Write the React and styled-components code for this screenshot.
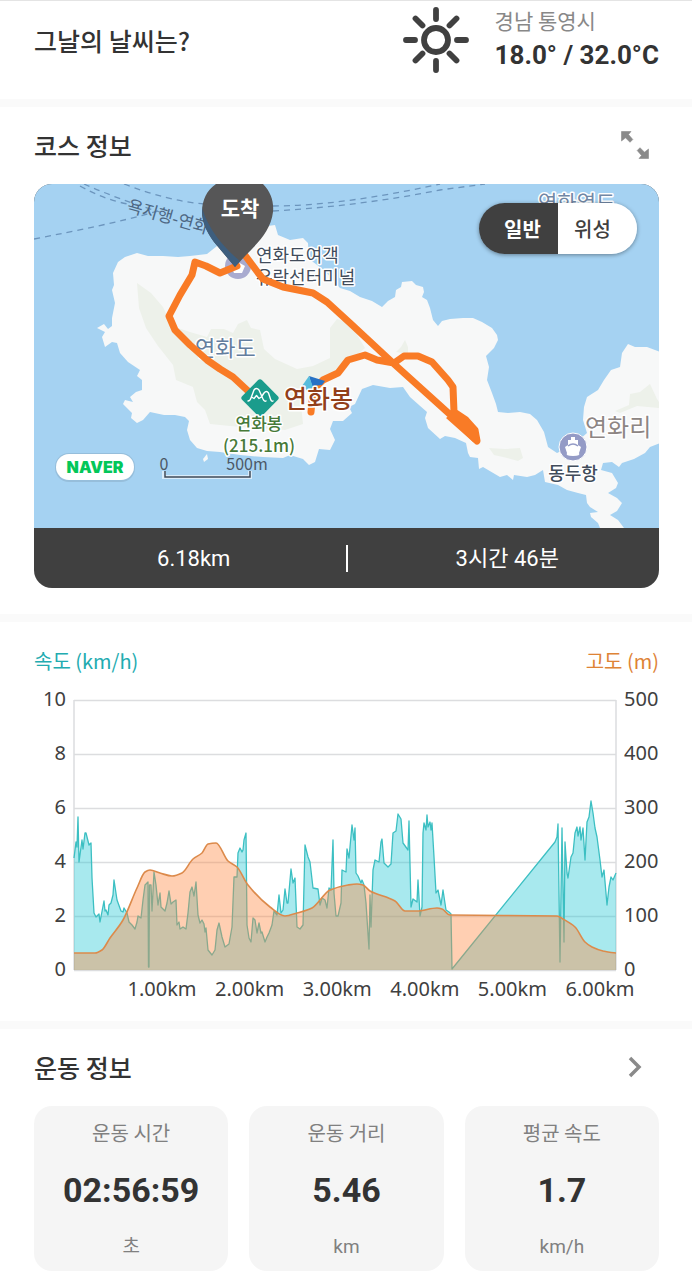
import React, { useState } from "react";
import styled, { createGlobalStyle } from "styled-components";

const GlobalStyle = createGlobalStyle`
	* {
		box-sizing: border-box;
	}

	body {
		margin: 0;
		background-color: #fff;
		color: #333;
		font-family: "Noto Sans CJK KR", sans-serif;
	}

	h2,
	p,
	dl,
	dt,
	dd {
		margin: 0;
	}

	button {
		font-family: inherit;
		border: 0;
		padding: 0;
		cursor: pointer;
	}
`;

const Page = styled.main`
	border-top: 1px solid #e4e4e4;
`;

const Section = styled.section`
	padding: 0 33px ${(props) => props.$bottom}px 34px;
	border-bottom: ${(props) => (props.$last ? "0" : "8px solid #fafafa")};
`;

const SectionHeader = styled.header`
	display: flex;
	align-items: center;
	justify-content: space-between;
	height: 77px;
	padding-bottom: 2px;
`;

const Title = styled.h2`
	font-size: 25px;
	line-height: 36px;
	font-weight: 500;
`;

const IconButton = styled.button`
	display: flex;
	align-items: center;
	justify-content: center;
	width: 48px;
	height: 46px;
	background: none;
	color: #8a8a8a;
`;

const WeatherRow = styled.div`
	display: flex;
	align-items: center;
	justify-content: space-between;
	padding-top: 4px;
`;

const Weather = styled.div`
	display: flex;
	align-items: center;
	gap: 26px;
`;

const Place = styled.p`
	font-size: 21px;
	line-height: 30px;
	color: #888;
`;

const Temperature = styled.p`
	font-family: Roboto, "Noto Sans CJK KR", sans-serif;
	font-size: 26px;
	line-height: 40px;
	font-weight: 700;
	white-space: nowrap;
`;

const CourseCard = styled.div`
	border-radius: 18px;
	overflow: hidden;
	background-color: #404040;
`;

const MapArea = styled.div`
	position: relative;

	svg {
		display: block;
		width: 100%;
		height: auto;
	}
`;

const MapToggle = styled.div`
	position: absolute;
	top: 19px;
	right: 22px;
	display: flex;
	border-radius: 26px;
	overflow: hidden;
	box-shadow: 0 1px 4px rgba(0, 0, 0, 0.4);
`;

const ToggleButton = styled.button`
	width: 79px;
	height: 51px;
	padding: ${(props) => (props.$side === "left" ? "0 0 0 8px" : "0 10px 0 0")};
	font-size: 20px;
	font-weight: ${(props) => (props.$active ? 700 : 500)};
	background-color: ${(props) => (props.$active ? "#404040" : "#fff")};
	color: ${(props) => (props.$active ? "#fff" : "#404040")};
`;

const MapLabel = styled.text`
	font-family: "Noto Sans CJK KR", sans-serif;
	font-size: ${(props) => props.$size}px;
	font-weight: ${(props) => props.$weight || 400};
	fill: ${(props) => props.$color};
	stroke: #fff;
	stroke-width: ${(props) => (props.$plain ? 0 : 3)}px;
	stroke-linejoin: round;
	paint-order: stroke;
`;

const NaverLabel = styled.text`
	font-family: Inter, sans-serif;
	font-size: 16px;
	font-weight: 900;
	fill: #03c75a;
`;

const CourseSummary = styled.div`
	display: flex;
	align-items: center;
	height: 60px;
`;

const SummaryValue = styled.p`
	flex: 1;
	padding: 2px 0 0 8px;
	font-family: Roboto, "Noto Sans CJK KR", sans-serif;
	font-size: 22px;
	line-height: 36px;
	text-align: center;
	color: #fff;
`;

const SummaryDivider = styled.span`
	width: 2px;
	height: 27px;
	background-color: #fff;
`;

const Legend = styled.div`
	display: flex;
	justify-content: space-between;
	padding-top: 24px;
`;

const LegendItem = styled.p`
	font-size: 20px;
	line-height: 30px;
	color: ${(props) => props.$color};
`;

const ChartSvg = styled.svg`
	display: block;
	width: 100%;
	height: auto;
`;

const AxisLabel = styled.text`
	font-family: "Noto Sans", sans-serif;
	font-size: 20px;
	fill: #404040;
`;

const StatGrid = styled.dl`
	display: grid;
	grid-template-columns: repeat(3, 1fr);
	gap: 21px;
`;

const StatCard = styled.div`
	display: flex;
	flex-direction: column;
	align-items: center;
	gap: 12px;
	padding: 12px 8px 9px;
	border-radius: 18px;
	background-color: #f5f5f5;
`;

const StatLabel = styled.dt`
	font-size: 20px;
	line-height: 30px;
	color: #808080;
`;

const StatValue = styled.dd`
	font-family: Roboto, "Noto Sans CJK KR", sans-serif;
	font-size: 34px;
	line-height: 60px;
	font-weight: 700;
`;

const StatUnit = styled.dd`
	font-family: Roboto, "Noto Sans CJK KR", sans-serif;
	font-size: 19px;
	line-height: 30px;
	color: #808080;
`;

const SunIcon = () => (
	<svg width="66" height="66" viewBox="0 0 66 66" fill="none" stroke="#404040" strokeWidth="5.8" strokeLinecap="round" aria-hidden="true">
		<circle cx="33" cy="33" r="12" />
		<path d="M33 3v9M33 54v9M3 33h9M54 33h9M12.500 11.500l7 7M53.500 11.500l-7 7M12.500 53.500l7-7M53.500 53.500l-7-7" />
	</svg>
);

const ExpandIcon = () => (
	<svg width="30" height="28" viewBox="0 0 30 28" aria-hidden="true">
		<path d="M1.500 .5H11L8.500 3.500L12.800 8.500L10 11.300L5.500 6.800L1.500 10ZM28.500 27.500H19L21.500 24.500L17.200 19.500L20 16.700L24.500 21.200L28.500 18Z" fill="currentColor" stroke="currentColor" strokeWidth="0.600" strokeLinejoin="round" />
	</svg>
);

const ChevronIcon = () => (
	<svg width="14" height="22" viewBox="0 0 14 22" fill="none" stroke="currentColor" strokeWidth="3.5" aria-hidden="true">
		<path d="M2 2L11 11L2 20" />
	</svg>
);

const MAINLAND =
	"M118 262L125 257L137 253L148 256L163 256L178 257L190 256L207 254L217 246L240 236L268 226L275 225L278 235L290 240L303 238L308 243L309 259L324 270L340 288L350 291L360 297L372 301L382 307L388 301L395 297L396 290L401 287L402 282L412 281L416 285L423 287L424 292L422 297L427 300L430 308L433 320L438 326L442 321L450 319L463 318L473 318L482 322L492 328L497 335L498 340L494 348L486 356L489 367L487 380L492 393L496 404L498 412L508 413L520 412L530 414L537 420L544 432L548 447L557 453L572 446L587 433L583 420L584 407L587 397L598 390L604 380L611 370L620 367L622 353L628 344L635 347L647 347L660 352V443L650 447L645 453L634 459L622 463L619 467L612 462L603 463L601 470L612 473L618 483L616 488L608 493L617 498L622 503L617 511L610 515L618 520L624 528H600L598 523L591 517L590 513L598 512L590 507L587 503L586 495L578 493L567 490L558 485L545 482L543 470L535 475L527 477L514 475L513 480L507 475L500 477L483 467L479 469L478 458L470 457L468 453L466 443L455 438L445 436L440 439L428 428L425 418L427 412L419 405L410 397L403 387L390 388L373 385L362 389L355 404L349 407L352 413L343 421L333 421L330 429L335 440L330 450L319 449L315 462L309 465L303 459L290 455L283 458L263 457L240 455L220 452L207 451L197 448L190 440L187 430L189 421L185 417L175 415L164 415L150 412L143 420L137 423L131 418L132 413L123 404L125 400L133 402L130 397L136 392L142 390L142 380L137 376L140 370L128 362L120 353L117 343L112 342L105 347L102 337L105 332L97 328L104 324L108 329L112 326L112 318L115 303L112 290L114 285L113 273Z";

const FOREST =
	"M137 283L151 293L163 307L172 326L190 332L207 337L211 329L224 329L233 333L238 324L247 320L251 328L260 330L264 349L275 359L297 369L313 366L330 358L330 328L337 319L350 323L365 348L350 361L325 380L300 395L303 424L285 430L230 426L210 424L205 410L197 402L193 387L176 380L173 365L158 346L146 328L139 308Z";

const ROUTE =
	"M237 266L220 273L206 266L195 262L192 275L180 295L169 316L175 330L190 345L207 360L220 369L233 377L247 390L256 398M244 254L256 270L263 279L283 287L313 293L327 302L350 323L393 363L455 419L477 441L475 430L466 420L454 412L453 387L448 380L432 362L418 356L404 356L394 363L377 360L365 355L348 360L338 373L323 380L313 390L311 412";

const CourseMap = () => (
	<svg viewBox="34 184 625 344" role="img" aria-label="연화도 코스 지도">
		<rect x="34" y="184" width="625" height="344" fill="#a5d2f2" />
		<g fill="none" stroke="#6c95bd" strokeWidth="1.3" strokeDasharray="6 5">
			<path d="M34 239C80 230 120 222 158 211" />
			<path d="M84 184Q120 200 160 212" />
			<path d="M80 186Q105 200 128 204" />
			<path d="M124 184Q168 201 204 204M273 211Q360 206 440 190L485 184" />
			<path d="M273 206Q340 206 440 184" />
		</g>
		<path d={MAINLAND} fill="#f7f8f8" />
		<path d="M203 459L207 454L208 459L204 462Z" fill="#f7f8f8" />
		<g fill="#edf1ea">
			<path d={FOREST} />
			<path d="M396 352L401 347L405 340L408 347L408 354Z" />
			<path d="M489 448L505 449L520 448L523 458L518 461L503 457L494 455Z" />
			<path d="M615 411L629 405L630 394L640 392L650 384L657 399L659 402V408L637 406L620 413Z" />
		</g>

		<MapLabel $size={17} $color="#4d6783" $plain transform="translate(126 211) rotate(16)">
			욕지행-연화
		</MapLabel>
		<MapLabel $size={21} $color="#7187a5" x="538" y="210">
			연화열도
		</MapLabel>
		<MapLabel $size={22} $color="#647e9e" x="195" y="356">
			연화도
		</MapLabel>
		<MapLabel $size={24} $color="#8d8583" x="585" y="436">
			연화리
		</MapLabel>

		{/* ferry terminal under the arrival pin */}
		<circle cx="238" cy="266" r="13" fill="#a9abd0" />
		<path d="M231 266L238 262L245 266L242 273H234Z" fill="#fff" />
		<MapLabel $size={18} $color="#414c5b" x="256" y="262">
			연화도여객
		</MapLabel>
		<MapLabel $size={18} $color="#414c5b" x="256" y="284">
			유락선터미널
		</MapLabel>

		<path d={ROUTE} fill="none" stroke="#f97b26" strokeWidth="7" strokeLinejoin="round" strokeLinecap="round" />
		<path d="M454 412L466 418L475 427L480 439Q480 446 473 442L446 418Z" fill="#f97b26" />

		<path d="M309 376L325 381L322 385L312 386Z" fill="#2772c5" />
		<path d="M302 386L309 376L313 387L308 391Z" fill="#57bddd" />

		{/* arrival pin */}
		<path d="M216 184H263C271 192 274 202 273 212C271 230 258 243 246 255L235 267L214 242C206 231 202 222 202 212C202 200 207 190 216 184Z" fill="#565657" />
		<path d="M202 208C202 222 206 231 214 242L235 267L240 261C229 252 210 234 202 208Z" fill="#3d5e7e" />
		<MapLabel $size={21} $weight={700} $color="#fff" $plain x="240" y="216" textAnchor="middle">
			도착
		</MapLabel>

		{/* summit marker */}
		<rect x="246" y="384" width="28" height="28" rx="3" fill="#1a9c8c" transform="rotate(45 260 398)" />
		<path d="M248 401Q250 401 251 398L254 390Q256.500 387 259 390L263 399Q264.500 402 266 401M251.500 397L254 398.500L256.500 395.500L259 398.500L262 396.500M262 396L264 393Q266.500 390 268.500 393L270.500 399Q271.500 402 273 401" fill="none" stroke="#fff" strokeWidth="1.4" strokeLinecap="round" strokeLinejoin="round" />
		<MapLabel $size={25} $weight={500} $color="#923f1a" x="284" y="408">
			연화봉
		</MapLabel>
		<MapLabel $size={17} $color="#477a38" $weight={500} x="259" y="430" textAnchor="middle">
			연화봉
		</MapLabel>
		<MapLabel $size={17} $color="#477a38" $weight={500} x="259" y="452" textAnchor="middle">
			(215.1m)
		</MapLabel>

		{/* Dongdu harbour */}
		<circle cx="573" cy="447" r="14" fill="#949bc6" stroke="#fff" strokeWidth="1" />
		<path d="M571 437H575V440H578V445L581 447L579 453Q581 456 573 456Q565 456 567 453L565 447L568 445V440H571Z" fill="#fff" />
		<path d="M568 446Q573 442 578 446" fill="none" stroke="#949bc6" strokeWidth="1.500" />
		<MapLabel $size={18} $color="#414c5b" $weight={500} x="573" y="480" textAnchor="middle">
			동두항
		</MapLabel>

		<rect x="55" y="453" width="80" height="29" rx="14" fill="#7f9fb8" opacity="0.4" />
		<rect x="56" y="454" width="78" height="26" rx="13" fill="#fff" />
		<NaverLabel x="95" y="473" textAnchor="middle">
			NAVER
		</NaverLabel>

		<path d="M164 471V477H250V471" fill="none" stroke="#d9ecfa" strokeWidth="4" />
		<path d="M165 471V477H250V471" fill="none" stroke="#3f4a58" strokeWidth="1.500" />
		<MapLabel $size={16} $color="#4c5866" $plain x="164" y="470" textAnchor="middle">
			0
		</MapLabel>
		<MapLabel $size={16} $color="#4c5866" $plain x="247" y="470" textAnchor="middle">
			500m
		</MapLabel>
	</svg>
);

const SPEED =
	"74,858 76,842 77,847 78,817 79,862 82,840 83,849 85,833 86,833 89,845 91,843 92,878 94,913 96,917 99,914 100,922 104,901 105,911 106,910 108,915 109,905 111,903 113,895 114,880 117,900 121,911 123,912 124,908 127,913 129,922 132,925 135,929 137,922 138,916 141,918 143,900 145,885 148,882 148.500,967 149,967 149.500,885 151,885 152,911 154,872 156,885 158,905 160,893 161,907 165,911 167,903 169,891 171,904 173,902 176,900 177,925 179,922 180,929 183,927 186,929 188,913 190,892 192,887 194,896 196,882 198,915 200,923 202,920 204,924 205,932 206,928 208,950 212,955 215,950 217,930 219,923 222,937 225,947 229,944 232,927 234,877 237,877 238,853 240,848 242,852 243,850 244,840 246,833 247,925 249,938 251,942 253,918 255,920 257,933 259,923 261,933 262,932 265,942 267,937 269,933 272,925 274,911 277,915 279,895 281,913 283,910 285,889 287,903 288,903 291,869 293,883 295,878 297,927 300,929 303,925 305,845 308,857 310,862 313,888 318,889 320,905 322,898 325,900 327,908 329,888 331,890 333,840 334,893 336,916 338,916 341,903 342,870 346,872 347,849 349,858 352,825 354,840 355,828 356,873 358,876 361,883 362,880 364,885 366,903 369,949 370,895 371,927 373,870 375,860 379,862 381,842 382,839 384,863 388,867 391,864 393,833 396,831 398,814 401,819 403,843 408,850 409,821 411,907 413,899 417,902 418,880 420,916 422,907 423,833 424,823 426,830 427,815 428,827 430,822 431,830 432,823 434,857 436,893 438,890 441,905 443,890 446,910 449,912 451,914 452,969 555,842 557,837 558,824 560,962 562,828 564,942 565,842 567,873 568,878 571,857 573,853 575,833 577,827 578,836 580,827 581,840 583,828 585,860 587,822 589,817 591,801 593,813 595,828 597,837 600,860 602,877 604,870 607,905 609,887 611,877 613,880 616,873";

const ALTITUDE = [
	[74, 953], [95, 953], [102, 950], [110, 938], [123, 920], [137, 888], [145, 872], [150, 870], [160, 873], [172, 876],
	[182, 873], [193, 859], [202, 853], [208, 844], [216, 843], [228, 861], [237, 867], [248, 885], [270, 907], [285, 916],
	[297, 913], [312, 908], [330, 890], [348, 885], [357, 884], [363, 885], [370, 891], [395, 901], [405, 911], [417, 911],
	[437, 908], [442, 909], [450, 915], [557, 916], [563, 919], [575, 927], [585, 942], [592, 947], [603, 951], [616, 953],
];

// monotone curve, so it never overshoots a flat run
const toCurve = (points) => {
	const slopes = points.slice(1).map(([x, y], i) => (y - points[i][1]) / (x - points[i][0]));
	const tangents = points.map((_, i) => {
		const before = slopes[i - 1] || 0;
		const after = slopes[i] || 0;
		return before * after > 0 ? (2 * before * after) / (before + after) : 0;
	});

	return points.reduce((path, [x, y], i) => {
		if (i === 0) {
			return `M${x} ${y}`;
		}
		const [px, py] = points[i - 1];
		const third = (x - px) / 3;
		return `${path}C${px + third} ${py + tangents[i - 1] * third} ${x - third} ${y - tangents[i] * third} ${x} ${y}`;
	}, "");
};

const ALTITUDE_PATH = toCurve(ALTITUDE);

const Chart = () => (
	<ChartSvg viewBox="34 676 625 326" role="img" aria-label="속도와 고도 그래프">
		<g stroke="#dcdddf" strokeWidth="1.500">
			{[0, 1, 2, 3, 4, 5].map((i) => (
				<path key={i} d={`M74 ${700.5 + i * 54}H616`} />
			))}
			<path d="M74 700V970M616 700V970" />
		</g>
		<polygon points={`74,970 ${SPEED} 616,970`} fill="#26c8d4" fillOpacity="0.4" />
		<polyline points={SPEED} fill="none" stroke="#3cbfc2" strokeWidth="1.300" strokeLinejoin="round" />
		<path d={`${ALTITUDE_PATH}V970H74Z`} fill="#ff863f" fillOpacity="0.4" />
		<path d={ALTITUDE_PATH} fill="none" stroke="#dc8a4b" strokeWidth="1.600" />
		{[10, 8, 6, 4, 2, 0].map((value, i) => (
			<AxisLabel key={value} x="66" y={706 + i * 54} textAnchor="end">
				{value}
			</AxisLabel>
		))}
		{[500, 400, 300, 200, 100, 0].map((value, i) => (
			<AxisLabel key={value} x="624" y={706 + i * 54}>
				{value}
			</AxisLabel>
		))}
		{[1, 2, 3, 4, 5, 6].map((km, i) => (
			<AxisLabel key={km} x={162 + i * 87.6} y="996" textAnchor="middle">
				{`${km}.00km`}
			</AxisLabel>
		))}
	</ChartSvg>
);

const STATS = [
	{ label: "운동 시간", value: "02:56:59", unit: "초" },
	{ label: "운동 거리", value: "5.46", unit: "km" },
	{ label: "평균 속도", value: "1.7", unit: "km/h" },
];

const App = () => {
	const [mapType, setMapType] = useState("normal");

	return (
		<React.Fragment>
			<GlobalStyle />
			<Page>
				<Section $bottom={24}>
					<WeatherRow>
						<Title>그날의 날씨는?</Title>
						<Weather>
							<SunIcon />
							<div>
								<Place>경남 통영시</Place>
								<Temperature>18.0° / 32.0°C</Temperature>
							</div>
						</Weather>
					</WeatherRow>
				</Section>

				<Section $bottom={26}>
					<SectionHeader>
						<Title>코스 정보</Title>
						<IconButton type="button" aria-label="지도 크게 보기">
							<ExpandIcon />
						</IconButton>
					</SectionHeader>
					<CourseCard>
						<MapArea>
							<CourseMap />
							<MapToggle>
								<ToggleButton
									type="button"
									$side="left"
									$active={mapType === "normal"}
									aria-pressed={mapType === "normal"}
									onClick={() => setMapType("normal")}
								>
									일반
								</ToggleButton>
								<ToggleButton
									type="button"
									$side="right"
									$active={mapType === "satellite"}
									aria-pressed={mapType === "satellite"}
									onClick={() => setMapType("satellite")}
								>
									위성
								</ToggleButton>
							</MapToggle>
						</MapArea>
						<CourseSummary>
							<SummaryValue>6.18km</SummaryValue>
							<SummaryDivider />
							<SummaryValue>3시간 46분</SummaryValue>
						</CourseSummary>
					</CourseCard>
				</Section>

				<Section $bottom={19}>
					<Legend>
						<LegendItem $color="#22abb0">속도 (km/h)</LegendItem>
						<LegendItem $color="#de8336">고도 (m)</LegendItem>
					</Legend>
					<Chart />
				</Section>

				<Section $bottom={8} $last>
					<SectionHeader>
						<Title>운동 정보</Title>
						<IconButton type="button" aria-label="운동 정보 더보기">
							<ChevronIcon />
						</IconButton>
					</SectionHeader>
					<StatGrid>
						{STATS.map((stat) => (
							<StatCard key={stat.label}>
								<StatLabel>{stat.label}</StatLabel>
								<StatValue>{stat.value}</StatValue>
								<StatUnit>{stat.unit}</StatUnit>
							</StatCard>
						))}
					</StatGrid>
				</Section>
			</Page>
		</React.Fragment>
	);
};

export default App;
